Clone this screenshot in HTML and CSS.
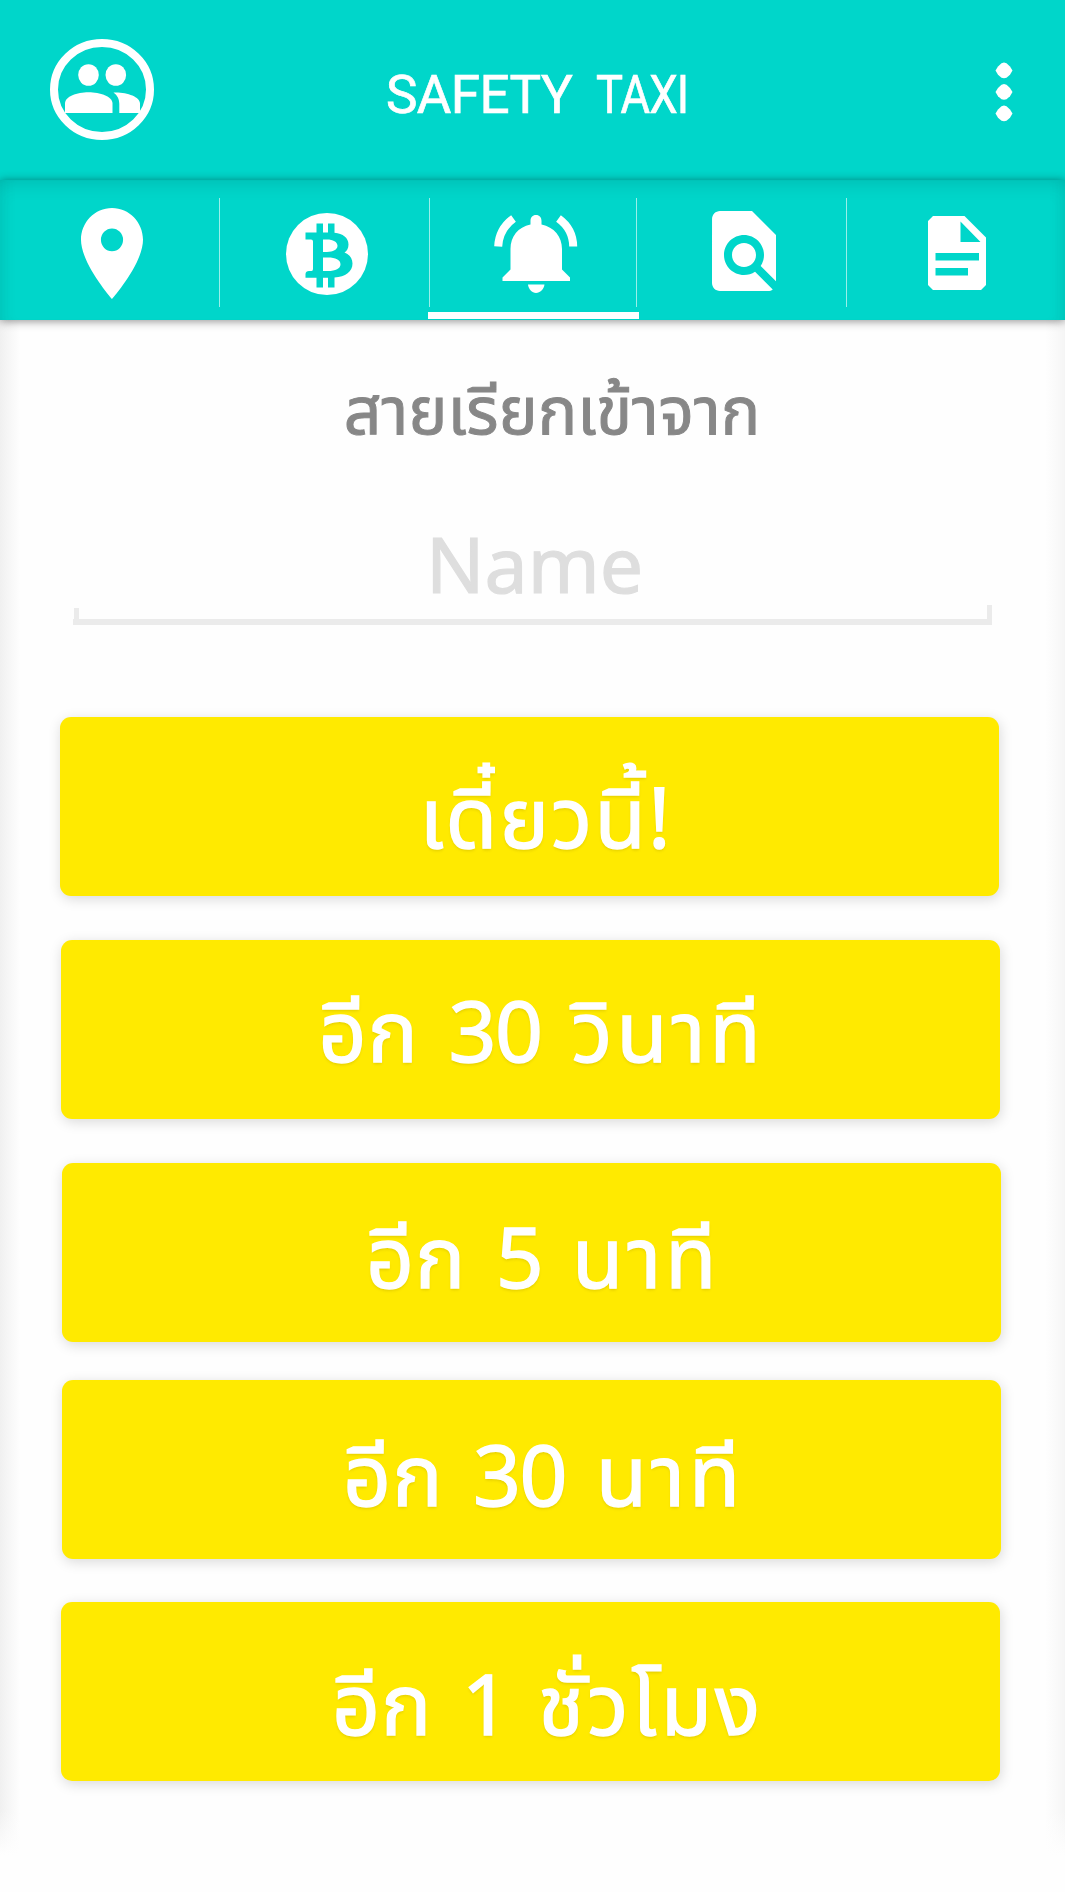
FILE: index.html
```html
<!DOCTYPE html>
<html lang="th">
<head>
<meta charset="utf-8">
<title>Safety Taxi</title>
<link rel="stylesheet" href="styles.css">
</head>
<body>
<div class="app">
  <header class="bar">
    <svg class="bar-users" viewBox="0 0 104 101">
      <ellipse cx="52" cy="50.5" rx="48" ry="46.5" fill="none" stroke="#fff" stroke-width="8"/>
      <g fill="#fff">
        <ellipse cx="38.500" cy="36" rx="10.300" ry="10.800"/>
        <ellipse cx="65.800" cy="36" rx="10.300" ry="10.800"/>
        <path d="M15 74V64.500C15 57.500 27 53.300 38.500 53.300S62.500 57.500 62.500 64.500V74Z"/>
        <path d="M69.300 74V65C69.300 60 67.500 56.500 63.500 53.500C76 52.800 90 57.500 90 64.500V74Z"/>
      </g>
    </svg>
    <h1 class="bar-title"><span class="w1">SAFETY</span> <span class="w2">TAXI</span></h1>
    <svg class="bar-more" viewBox="0 0 18 60" fill="#fff">
      <path id="dot" d="M.5 8.500 3 4.500 6.500 1.200 9 .5 11.500 1.200 15 4.500 17.500 8.500 15 12.700 11.500 15.700 9 16.200 6.500 15.700 3 12.700Z"/>
      <use href="#dot" y="21.500"/>
      <use href="#dot" y="43"/>
    </svg>
  </header>
  <nav class="tabs">
    <a class="tab"><svg class="ic-pin" viewBox="5 2 14 20" preserveAspectRatio="none"><path fill="#fff" d="M12 2C8.130 2 5 5.130 5 9c0 5.250 7 13 7 13s7-7.750 7-13c0-3.870-3.130-7-7-7zm0 9.500a2.500 2.500 0 0 1 0-5 2.500 2.500 0 0 1 0 5z"/></svg></a>
    <a class="tab"><svg class="ic-coin" viewBox="0 0 82 82"><circle cx="41" cy="41" r="41" fill="#fff"/>
      <path fill="#00d6ca" fill-rule="evenodd" d="M19.500 19.500H30.500V10.500H37V19.500H42V10.500H48.500V19.800C57 20.500 62.500 25 62.500 31.500C62.500 35.500 60.800 38 58.500 39.500C63.500 41.500 66.500 45.500 66.500 50.500C66.500 58.500 59.500 64 48.500 64.500V74.500H42V64.700H37V74.500H30.500V64.700H19.500V61C19.500 59 21 58 23 58H25.500Q27 58 27 56V28.500Q27 26.500 25 26.500H19.500ZM37 26.500V39H41C47 39 51.500 36.700 51.500 32.800C51.500 28.800 47 26.500 41 26.500ZM37 44.500V58H42C49.500 58 54.500 55.500 54.500 51.200C54.500 46.800 49.500 44.500 42 44.500Z"/></svg></a>
    <a class="tab tab-on"><svg class="ic-bell" viewBox="0 0 84 78"><g fill="#fff">
      <path d="M36.500 9.500V6C36.500 2.500 38.500 0 42 0S47.500 2.500 47.500 6V9.500C60 12 68 21.500 68 34V54.500L76 62.500V66H8.500V62.500L16.500 54.500V34C16.500 21.500 24 12 36.500 9.500Z"/>
      <path d="M34 69.500H50.500C50 74 46 78 42 78S34.500 74 34 69.500Z"/></g>
      <path d="M19.500 3.500Q5 14 4.200 31.500M64.500 3.500Q79 14 79.200 31.500" fill="none" stroke="#fff" stroke-width="8"/></svg></a>
    <a class="tab"><svg class="ic-find" viewBox="4 2 16 20"><path fill="#fff" d="M20 19.590V8l-6-6H6c-1.100 0-1.990.9-1.990 2L4 20c0 1.100.89 2 1.990 2H18c.45 0 .85-.15 1.190-.4l-4.430-4.430c-.8.520-1.740.83-2.760.83-2.760 0-5-2.240-5-5s2.240-5 5-5 5 2.240 5 5c0 1.020-.31 1.960-.83 2.750L20 19.590zM9 13c0 1.660 1.340 3 3 3s3-1.340 3-3-1.340-3-3-3-3 1.340-3 3z"/></svg></a>
    <a class="tab"><svg class="ic-doc" viewBox="0 0 58 74"><path fill="#fff" fill-rule="evenodd" d="M5 0H36.500L58 21.500V69L53 74H5L0 69V5ZM32.500 5.500V26H52.500ZM7.500 37V44.500H51V37ZM7.500 52V59.500H40V52Z"/></svg></a>
  </nav>
  <main class="call">
    <h2 class="call-from">สายเรียกเข้าจาก</h2>
    <div class="field"><span class="name">Name</span></div>
    <div class="choices">
      <button class="choice c1"><span>เดี๋ยวนี้!</span></button>
      <button class="choice c2">อีก <span class="num">30</span> <span class="unit">วินาที</span></button>
      <button class="choice c3">อีก <span class="num">5</span> <span class="unit">นาที</span></button>
      <button class="choice c4">อีก <span class="num">30</span> <span class="unit">นาที</span></button>
      <button class="choice c5">อีก <span class="num">1</span> <span class="unit">ชั่วโมง</span></button>
    </div>
  </main>
</div>
</body>
</html>
```
FILE: styles.css
```css
* { box-sizing: border-box; }
body { margin: 0; background: #fefefe; font-family: "Noto Sans", "Noto Sans Thai", sans-serif; }
.app { width: 1065px; height: 1892px; overflow: hidden; display: flex; flex-direction: column; }
h1, h2 { margin: 0; font-weight: 400; white-space: nowrap; }

.bar { height: 180px; flex: none; background: #00d6ca; display: flex; align-items: flex-start; padding: 0 52px 0 50px; }
.bar-users { width: 104px; height: 101px; margin-top: 39px; }
.bar-title { display: flex; gap: 24px; font: 400 53px/62px Roboto, sans-serif; color: #fff; margin: 64px 0 0 232px; -webkit-text-stroke: .7px #fff; }
.w1 { letter-spacing: -.6px; }
.w2 { letter-spacing: -1px; transform: scaleX(.855); transform-origin: left; }
.bar-more { width: 18px; height: 60px; margin: 62px 0 0 auto; }

.tabs { height: 140px; flex: none; display: grid; grid-template-columns: 219px 210px 207px 210px 219px; background: #00d6ca; box-shadow: inset 0 10px 18px -7px rgba(0,80,80,.2), inset 14px 0 14px -10px rgba(0,80,80,.08), inset -14px 0 14px -10px rgba(0,80,80,.08), 0 1px 9px rgba(0,0,0,.45); z-index: 1; }
.tab { display: flex; align-items: flex-start; position: relative; }
.tab + .tab::before { content: ""; width: 1px; height: 109px; margin-top: 18px; background: rgba(255,255,255,.6); }
.ic-pin { width: 62px; height: 91px; margin: 28px 0 0 81px; }
.ic-coin { width: 82px; height: 82px; margin: 33px 0 0 66px; }
.ic-bell { width: 84px; height: 78px; margin: 35px 0 0 64px; }
.ic-find { width: 64px; height: 80px; margin: 31px 0 0 75px; }
.ic-doc { width: 58px; height: 74px; margin: 36px 0 0 81px; }
.tab-on::after { content: ""; position: absolute; left: -1px; right: -3px; bottom: 1px; height: 7px; background: #fff; }

.call { height: 1572px; flex: none; padding-top: 48px; display: flex; flex-direction: column; background: linear-gradient(rgba(254,254,254,0) 1490px, #fefefe 1535px), linear-gradient(90deg, #f0f0f0, #f6f6f6 8px, #fefefe 20px, #fefefe 1045px, #f9f9f9 1057px, #f5f5f5); }
.call-from { font-size: 66px; line-height: 80px; color: #878787; text-align: center; padding-left: 39px; margin-bottom: 12px; -webkit-text-stroke: 1px #878787; }
.field { position: relative; width: 919px; height: 165px; margin-left: 73px; border-bottom: 6px solid #ebebeb; display: flex; justify-content: center; padding: 59px 0 0 4px; }
.field::before, .field::after { content: ""; position: absolute; bottom: 0; width: 5px; background: #ebebeb; }
.field::before { left: 1px; height: 11px; }
.field::after { right: 0; height: 14px; }
.name { font-size: 77px; line-height: 90px; color: #dedede; -webkit-text-stroke: 1.2px #dedede; }
.choices { display: flex; flex-direction: column; margin-top: 92px; padding-left: 60px; }
.choice { width: 939px; height: 179px; flex: none; border: 0; border-radius: 11px; background: #ffea00; color: #fff; font: 400 84px/100px "Noto Sans", "Noto Sans Thai", sans-serif; letter-spacing: .8px; word-spacing: 7px; -webkit-text-stroke: 1.4px #fff; text-shadow: 0 2px 3px rgba(120,100,0,.2); box-shadow: 1px 3px 13px rgba(0,0,0,.15); }
.num { letter-spacing: -1.5px; }
.unit { letter-spacing: 3.800px; }
.c1 { padding: 18px 0 0 33px; letter-spacing: 2px; }
.c2 { margin: 44px 0 0 1px; padding: 0 0 0 22px; }
.c3 { margin: 44px 0 0 2px; padding: 6px 0 0 23px; }
.c4 { margin: 38px 0 0 2px; padding: 8px 0 0 24px; }
.c5 { margin: 43px 0 0 1px; padding: 22px 0 0 34px; }
.c5 .unit { letter-spacing: 3px; }
```
